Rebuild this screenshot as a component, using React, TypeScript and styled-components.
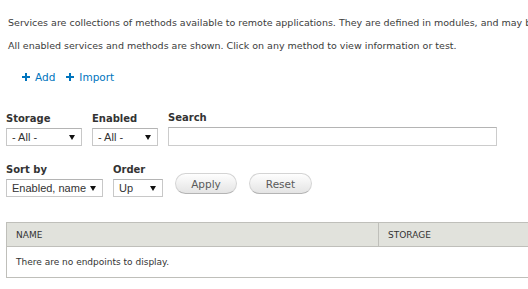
import React from 'react';
import styled, { createGlobalStyle } from 'styled-components';

const GlobalStyle = createGlobalStyle`
  body {
    margin: 0;
    background: #fff;
    color: #333;
    font-family: "DejaVu Sans", Verdana, sans-serif;
    overflow: hidden;
  }
`;

const Page = styled.div`
  padding: 16px 0 0 6px;
  width: 522px;
  overflow: hidden;
`;

const Intro = styled.p`
  margin: 0 0 9px 2px;
  font-size: 9.5px;
  line-height: 14px;
  white-space: nowrap;
  color: #3b3b3b;
`;

const ActionBar = styled.ul`
  display: flex;
  gap: 11px;
  list-style: none;
  margin: 17px 0 0 16px;
  padding: 0;
`;

const ActionLink = styled.a`
  display: flex;
  align-items: center;
  gap: 5px;
  font-size: 10.5px;
  line-height: 14px;
  color: #0074bd;
  text-decoration: none;
`;

const FilterRow = styled.div<{ $top: number }>`
  display: flex;
  align-items: flex-end;
  gap: 10px;
  margin-top: ${p => p.$top}px;
`;

const Field = styled.div`
  display: flex;
  flex-direction: column;
  gap: 3px;
`;

const Label = styled.label`
  font-weight: bold;
  font-size: 10px;
  line-height: 12px;
  color: #333;
`;

const Select = styled.div<{ $w: number }>`
  box-sizing: border-box;
  width: ${p => p.$w}px;
  height: 18px;
  display: flex;
  align-items: center;
  justify-content: space-between;
  padding: 0 6px 0 5px;
  border: 1px solid #c8c8c8;
  border-top-color: #b4b4b4;
  background: #fff;
  font-family: "Liberation Sans", Arial, sans-serif;
  font-size: 11px;
  color: #333;
  &::after {
    content: "";
    border-left: 3px solid transparent;
    border-right: 3px solid transparent;
    border-top: 5px solid #111;
  }
`;

const SearchInput = styled.div`
  box-sizing: border-box;
  width: 329px;
  height: 19px;
  border: 1px solid #ccc;
  border-top-color: #b4b4b4;
  background: #fff;
`;

const Buttons = styled.div`
  display: flex;
  gap: 12px;
  margin-left: 2px;
  margin-bottom: 3px;
`;

const Button = styled.button<{ $w: number }>`
  box-sizing: border-box;
  width: ${p => p.$w}px;
  height: 21px;
  padding: 0;
  border: 1px solid #d4d4d4;
  border-bottom-color: #b4b4b4;
  border-radius: 11px;
  background: linear-gradient(#fefefe, #e4e4e4);
  color: #5a5a5a;
  font-family: "DejaVu Sans", Verdana, sans-serif;
  font-size: 10.5px;
`;

const Table = styled.table`
  margin-top: 25px;
  width: 640px;
  border-collapse: collapse;
  border: 1px solid #bfbfba;
  font-size: 9px;
`;

const Th = styled.th<{ $w?: string }>`
  text-align: left;
  font-weight: normal;
  background: #e1e2dc;
  height: 23px;
  padding: 0 9px;
  border-left: 1px solid #bfbfba;
  color: #333;
  width: ${p => p.$w || 'auto'};
`;

const Td = styled.td`
  height: 30px;
  padding: 0 9px;
  border-top: 1px solid #bfbfba;
  color: #333;
`;

const Plus = () => (
  <svg width="8" height="8" viewBox="0 0 8 8">
    <path d="M3 0h2v3h3v2H5v3H3V5H0V3h3z" fill="#0074bd" />
  </svg>
);

export default function App() {
  return (
    <>
      <GlobalStyle />
      <Page>
        <Intro>
          Services are collections of methods available to remote applications. They are defined in modules, and may be accessed in a number of ways through server modules.
        </Intro>
        <Intro>All enabled services and methods are shown. Click on any method to view information or test.</Intro>
        <ActionBar>
          <li><ActionLink href="#"><Plus />Add</ActionLink></li>
          <li><ActionLink href="#"><Plus />Import</ActionLink></li>
        </ActionBar>
        <FilterRow $top={28}>
          <Field>
            <Label>Storage</Label>
            <Select $w={76}>- All -</Select>
          </Field>
          <Field>
            <Label>Enabled</Label>
            <Select $w={66}>- All -</Select>
          </Field>
          <Field>
            <Label>Search</Label>
            <SearchInput />
          </Field>
        </FilterRow>
        <FilterRow $top={18}>
          <Field>
            <Label>Sort by</Label>
            <Select $w={97}>Enabled, name</Select>
          </Field>
          <Field>
            <Label>Order</Label>
            <Select $w={50}>Up</Select>
          </Field>
          <Buttons>
            <Button $w={62}>Apply</Button>
            <Button $w={63}>Reset</Button>
          </Buttons>
        </FilterRow>
        <Table>
          <thead>
            <tr>
              <Th $w="353px">NAME</Th>
              <Th>STORAGE</Th>
            </tr>
          </thead>
          <tbody>
            <tr>
              <Td colSpan={2}>There are no endpoints to display.</Td>
            </tr>
          </tbody>
        </Table>
      </Page>
    </>
  );
}
